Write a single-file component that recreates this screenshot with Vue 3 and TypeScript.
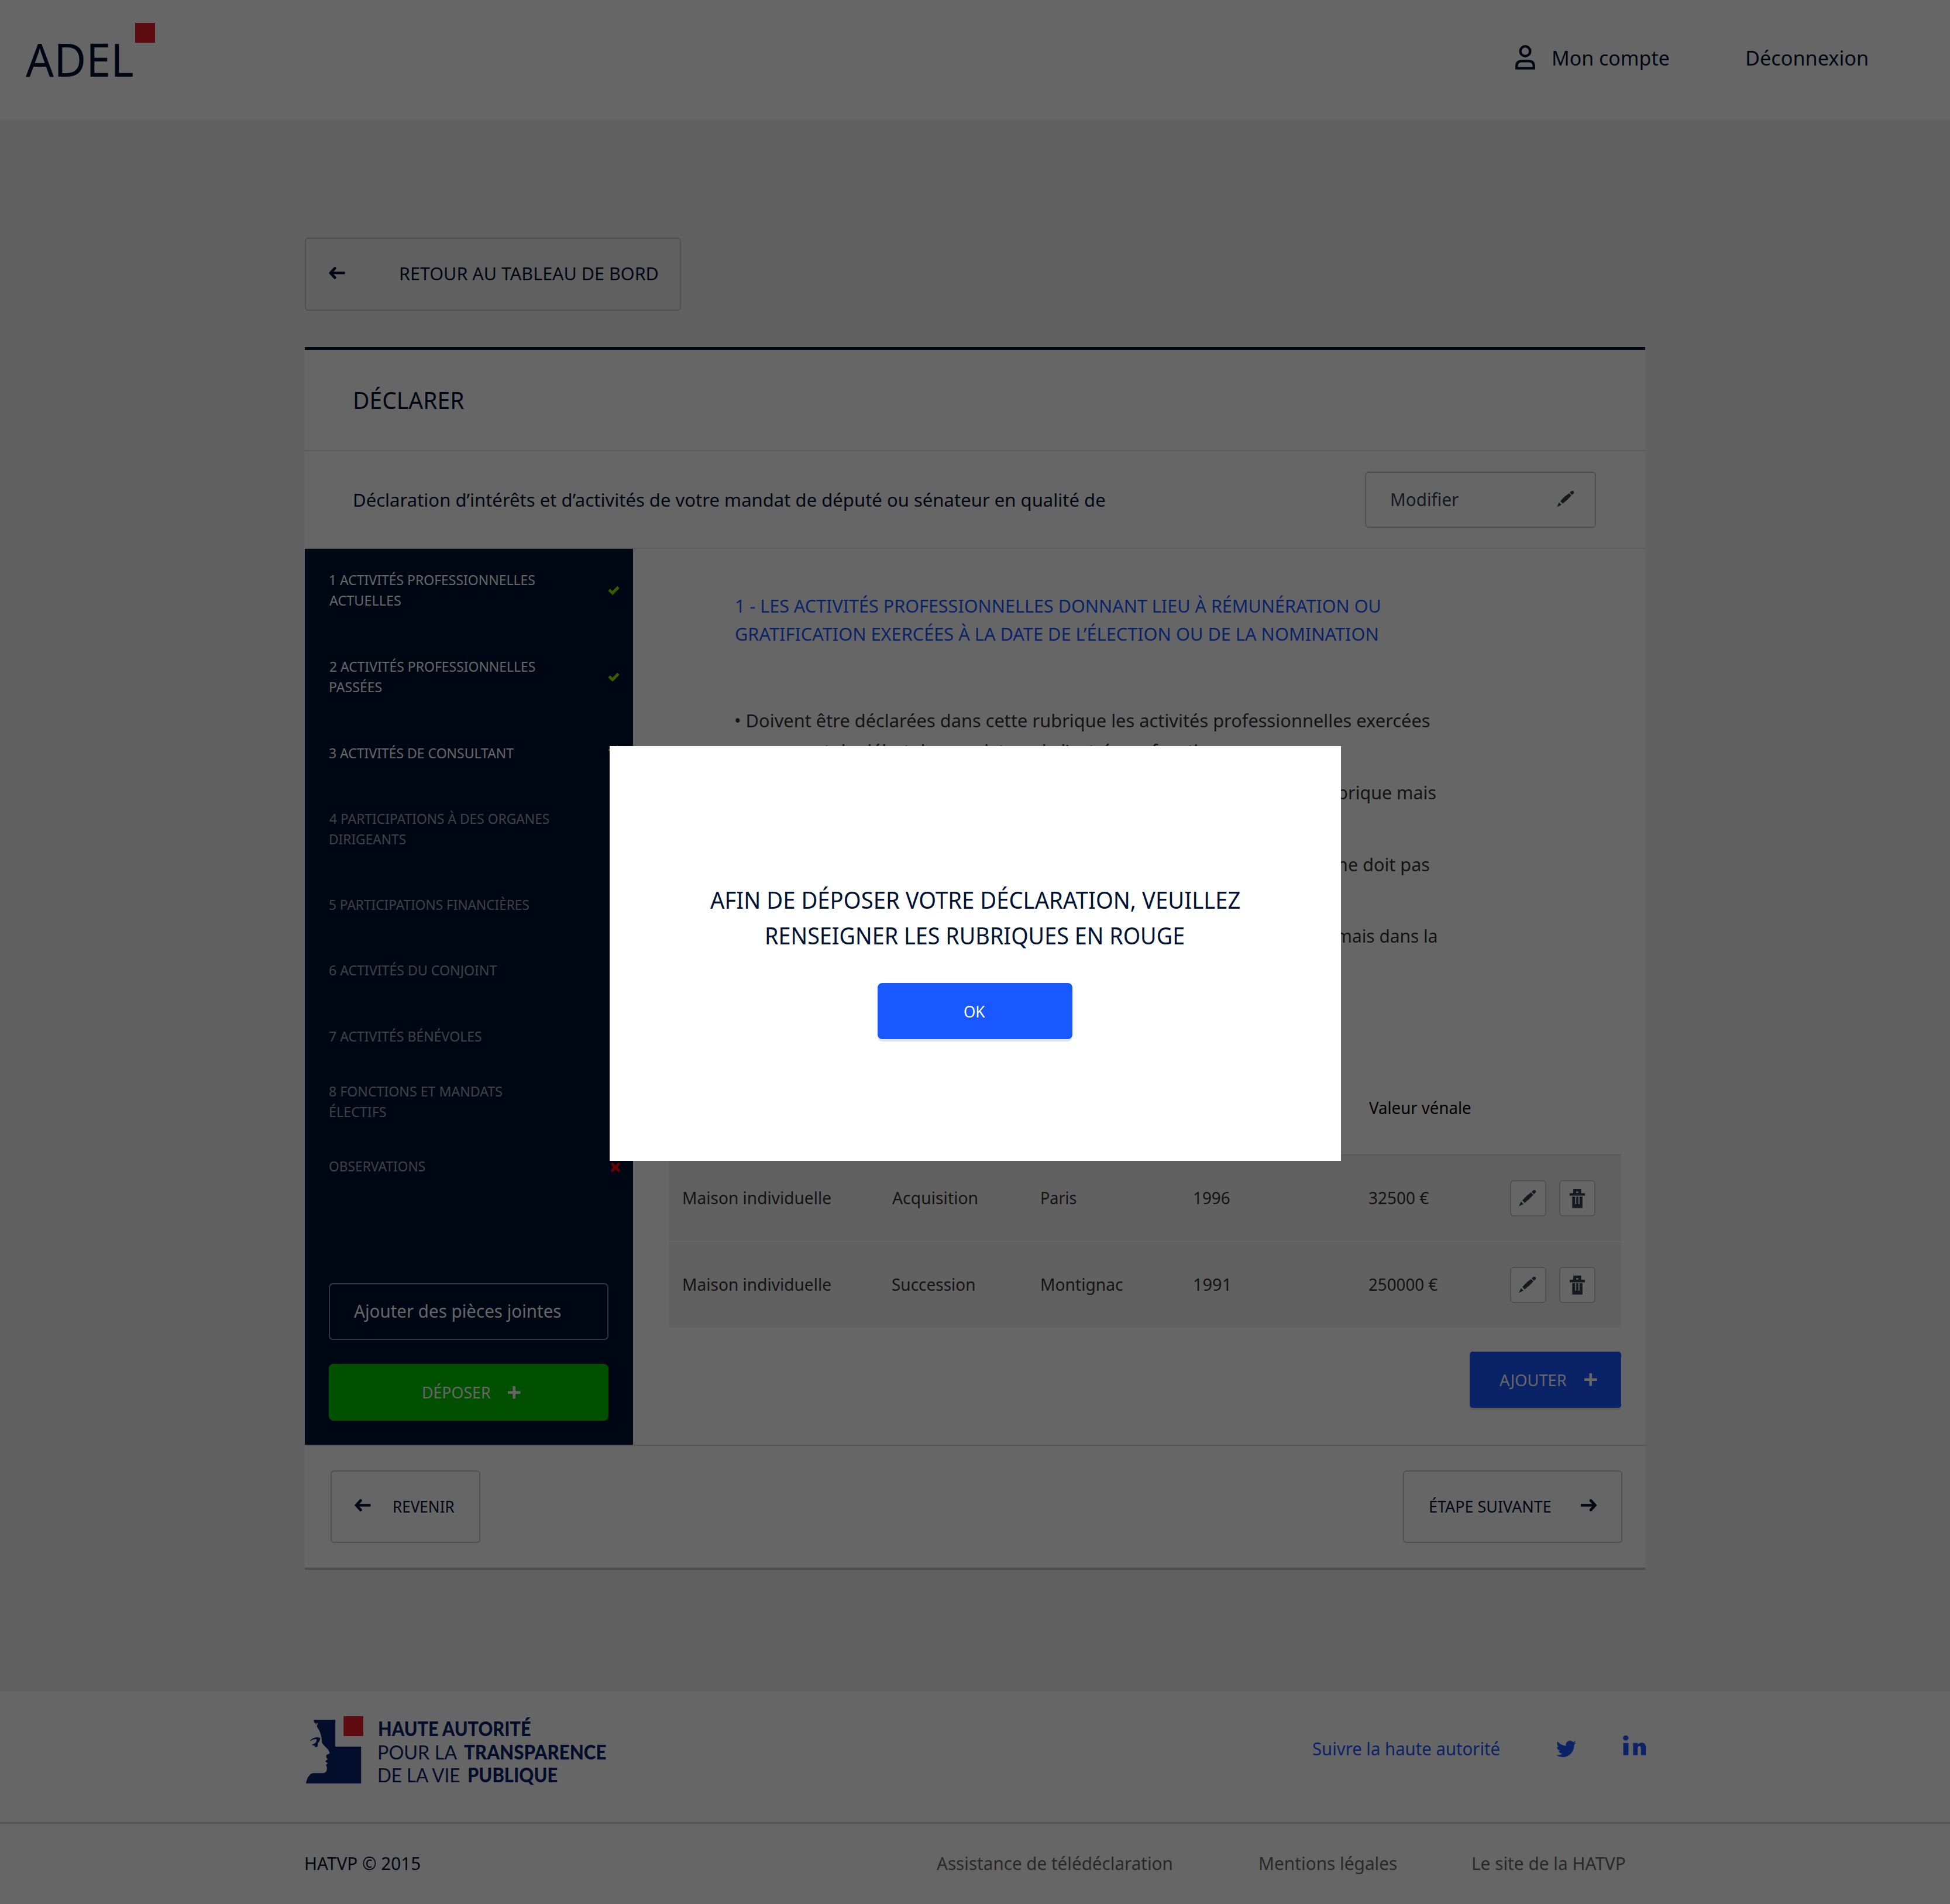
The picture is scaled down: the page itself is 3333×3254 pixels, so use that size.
<script setup lang="ts">
import { h, type Directive, type FunctionalComponent } from 'vue'

interface Line {
  text: string
  dx: number
  w: number
}
interface Rubrique {
  lines: Line[]
  height: number
  state?: 'ok' | 'ko'
  off?: boolean
}
interface Cell {
  text: string
  w: number
}

/* Condenses a line of text so that its ink spans [indent, indent + width]. */
const context = document.createElement('canvas').getContext('2d')!
const vFit: Directive<HTMLElement, number | [number, number]> = {
  mounted(el, { value }) {
    const [x, width] = Array.isArray(value) ? value : [0, value]
    const cs = getComputedStyle(el)
    context.font = `${cs.fontWeight} ${cs.fontSize} ${cs.fontFamily}`
    const m = context.measureText(el.textContent ?? '')
    const left = -m.actualBoundingBoxLeft
    const scale = width / (m.actualBoundingBoxRight - left)
    const natural = el.getBoundingClientRect().width
    el.style.transform = `scaleX(${scale})`
    el.style.marginLeft = `${x - left * scale}px`
    el.style.marginRight = `${width + left * scale - natural}px`
  },
}

const icon = (w: number, hgt: number, children: () => ReturnType<typeof h>[]): FunctionalComponent => () =>
  h('svg', { width: w, height: hgt, viewBox: `0 0 ${w} ${hgt}`, fill: 'currentColor' }, children())
const line = (d: string, sw: number, cap = 'butt') =>
  h('path', { d, fill: 'none', stroke: 'currentColor', 'stroke-width': sw, 'stroke-linecap': cap, 'stroke-linejoin': 'miter' })
const fill = (d: string) => h('path', { d, 'fill-rule': 'evenodd' })

const ArrowLeft = icon(27.5, 21, () => [line('M27.5 10.5H4', 4.4), line('M10.5 2.4 3 10.5l7.5 8.1', 4.6, 'round')])
const ArrowRight = icon(27.5, 21, () => [line('M0 10.5h23.5', 4.4), line('M17 2.4l7.5 8.1-7.5 8.1', 4.6, 'round')])
const Plus = icon(21.5, 21.5, () => [line('M10.75 0v21.5M0 10.75h21.5', 4.6)])
const Check = icon(20, 16, () => [line('M2 7l6 5.6L18 2.4', 5)])
const Cross = icon(16, 16, () => [line('M2.7 2.7l10.6 10.6M13.3 2.7 2.7 13.3', 5, 'round')])
const Pencil = icon(29.5, 27.6, () => [
  fill('M0 27.6 3.9 19.4 7.9 23.8ZM6 17.4Q12 10 20.8 4.1L25 7.8Q18 16 10 21.8ZM22.1 2.9Q24 .2 26 .1Q28 -.2 29 1.2Q30 3 28.4 4.6L25.9 6.8Z'),
])
const Trash = icon(26, 32.5, () => [
  fill('M6 0h13.6v7.3H26v4.2H0V7.3h6ZM11 4.4v2.4h3.8V4.4ZM4.3 13h5v13h1.9V13h3.6v13h1.9V13h5.1v19.5H4.3Z'),
])
const User = icon(34, 42, () => [
  h('ellipse', { cx: 17, cy: 10.6, rx: 8.4, ry: 8.4, fill: 'none', stroke: 'currentColor', 'stroke-width': 4.3 }),
  line('M2.2 39.6V36.5Q2.2 27.3 11 27.3H23Q31.8 27.3 31.8 36.5V39.6Z', 4.3),
])
const LinkedIn = icon(39, 34, () => [
  h('ellipse', { cx: 4.8, cy: 4.3, rx: 4.7, ry: 4.3 }),
  fill('M.6 12.7h8.8v21H.6ZM17.4 12.7h8v2.8c1.5-2 4-3.3 6.8-3.3 5 0 6.8 3.5 6.8 8.5v13h-8.2V22c0-2.5-.8-3.9-2.5-3.9-2 0-3.1 1.4-3.1 3.8v11.8h-7.8Z'),
])

const rubriques: Rubrique[] = [
  { lines: [{ text: '1 ACTIVITÉS PROFESSIONNELLES', dx: 1.5, w: 350 }, { text: 'ACTUELLES', dx: 0.7, w: 122 }], height: 148, state: 'ok' },
  { lines: [{ text: '2 ACTIVITÉS PROFESSIONNELLES', dx: 1, w: 350.5 }, { text: 'PASSÉES', dx: 1.5, w: 88.4 }], height: 148, state: 'ok' },
  { lines: [{ text: '3 ACTIVITÉS DE CONSULTANT', dx: 0.7, w: 315 }], height: 111.9, state: 'ok' },
  { lines: [{ text: '4 PARTICIPATIONS À DES ORGANES', dx: 0.3, w: 375.4 }, { text: 'DIRIGEANTS', dx: 1.5, w: 129.3 }], height: 147.5, off: true },
  { lines: [{ text: '5 PARTICIPATIONS FINANCIÈRES', dx: 0.7, w: 341 }], height: 112, off: true },
  { lines: [{ text: '6 ACTIVITÉS DU CONJOINT', dx: 0.3, w: 286.2 }], height: 112.2, off: true },
  { lines: [{ text: '7 ACTIVITÉS BÉNÉVOLES', dx: 0.7, w: 259.8 }], height: 94.3, off: true },
  { lines: [{ text: '8 FONCTIONS ET MANDATS', dx: 0.3, w: 295 }, { text: 'ÉLECTIFS', dx: 1.5, w: 95.7 }], height: 128.4, off: true },
  { lines: [{ text: 'OBSERVATIONS', dx: 0.7, w: 163.4 }], height: 35.4, state: 'ko', off: true },
]

const regles = [
  { tail: 'rubrique mais', w: 198, end: 1197.5 },
  { tail: 'ne doit pas', w: 156, end: 1186.5 },
  { tail: 'mais dans la', w: 171, end: 1199.5 },
]

const rows: Cell[][] = [
  [{ text: 'Maison individuelle', w: 252.5 }, { text: 'Acquisition', w: 145 }, { text: 'Paris', w: 59.5 }, { text: '1996', w: 61 }, { text: '32500 €', w: 102.3 }],
  [{ text: 'Maison individuelle', w: 252.5 }, { text: 'Succession', w: 140.5 }, { text: 'Montignac', w: 139.5 }, { text: '1991', w: 58.5 }, { text: '250000 €', w: 117.5 }],
]
</script>

<template>
  <div class="page">
    <header class="top">
      <div class="brand">
        <span v-fit="183.5" class="t brand-name">ADEL</span>
        <i class="brand-square"></i>
      </div>
      <nav class="account">
        <div class="profile">
          <User />
          <a v-fit="198" class="t">Mon compte</a>
        </div>
        <a v-fit="205.5" class="t">Déconnexion</a>
      </nav>
    </header>

    <main class="main">
      <button class="btn back">
        <ArrowLeft />
        <span v-fit="[1, 440]" class="t">RETOUR AU TABLEAU DE BORD</span>
      </button>

      <section class="card">
        <h1 class="title"><span v-fit="187" class="t">DÉCLARER</span></h1>
        <div class="subject">
          <span v-fit="1283" class="t">Déclaration d’intérêts et d’activités de votre mandat de député ou sénateur en qualité de</span>
          <button class="btn edit">
            <span v-fit="114.5" class="t">Modifier</span>
            <Pencil class="pencil" />
          </button>
        </div>

        <div class="body">
          <aside class="side">
            <div v-for="(r, i) in rubriques" :key="i" class="rub" :class="{ off: r.off, short: r.lines.length === 1 }" :style="{ height: r.height + 'px' }">
              <div>
                <span v-for="l in r.lines" :key="l.text" v-fit="[l.dx, l.w]" class="t rub-line">{{ l.text }}</span>
              </div>
              <Check v-if="r.state === 'ok'" class="ok" />
              <Cross v-if="r.state === 'ko'" class="ko" />
            </div>
            <div class="side-actions">
              <button class="btn attach"><span v-fit="353.5" class="t">Ajouter des pièces jointes</span></button>
              <button class="btn submit">
                <span v-fit="115.5" class="t">DÉPOSER</span>
                <Plus />
              </button>
            </div>
          </aside>

          <div class="content">
            <h2 class="heading">
              <span v-fit="[1.5, 1101]" class="t">1 - LES ACTIVITÉS PROFESSIONNELLES DONNANT LIEU À RÉMUNÉRATION OU</span>
              <span v-fit="[0.5, 1097]" class="t">GRATIFICATION EXERCÉES À LA DATE DE L’ÉLECTION OU DE LA NOMINATION</span>
            </h2>
            <div class="rules">
              <div class="rule">
                <span v-fit="[1, 1186.5]" class="t">• Doivent être déclarées dans cette rubrique les activités professionnelles exercées</span>
                <span v-fit="850" class="t">au moment du début du mandat ou de l’entrée en fonctions.</span>
              </div>
              <div v-for="r in regles" :key="r.tail" class="rule split" :style="{ width: r.end + 'px' }">
                <span v-fit="r.w" class="t">{{ r.tail }}</span>
              </div>
            </div>

            <div class="table">
              <div class="row head">
                <span v-fit="174" class="t value">Valeur vénale</span>
              </div>
              <div v-for="(row, i) in rows" :key="i" class="row">
                <span v-for="c in row" :key="c.text" v-fit="c.w" class="t cell">{{ c.text }}</span>
                <button class="tool"><Pencil class="small-pencil" /></button>
                <button class="tool"><Trash /></button>
              </div>
            </div>

            <button class="btn add">
              <span v-fit="114.5" class="t">AJOUTER</span>
              <Plus />
            </button>
          </div>
        </div>

        <div class="separator"></div>
        <div class="steps">
          <button class="btn prev">
            <ArrowLeft class="up" />
            <span v-fit="103.7" class="t">REVENIR</span>
          </button>
          <button class="btn next">
            <span v-fit="206.5" class="t">ÉTAPE SUIVANTE</span>
            <ArrowRight class="up" />
          </button>
        </div>
      </section>
    </main>

    <footer class="foot">
      <div class="foot-top">
        <svg class="emblem" viewBox="60 159 256 345" preserveAspectRatio="none">
          <path fill="#e81c23" d="M228 159H316V261H228Z" />
          <path
            fill="#07256e"
            d="M95 178H191V315H306V504H60C64 478 74 455 92 451H137C150 449 156 437 153 420L149 409 157 401 146 389 157 380C150 371 148 366 152 357L165 350C166 340 158 328 150 320C138 305 130 300 131 285C130 262 125 245 117 227C108 212 107 208 112 200Q112 190 107 196L105 204 103 196Q93 192 95 178Z"
          />
          <path fill="#07256e" d="M76 288C84 274 98 267 112 267L124 271C121 285 121 290 114 296L112 316 98 318 101 311 85 307C95 300 103 298 105 290C107 283 109 279 107 277C96 276 86 281 76 288Z" />
        </svg>
        <div class="authority">
          <div class="auth-line"><b v-fit="260.5" class="t">HAUTE AUTORITÉ</b></div>
          <div class="auth-line">
            <span v-fit="133.5" class="t">POUR LA</span>
            <b v-fit="243" class="t">TRANSPARENCE</b>
          </div>
          <div class="auth-line vie">
            <span v-fit="139.3" class="t">DE LA VIE</span>
            <b v-fit="152" class="t">PUBLIQUE</b>
          </div>
        </div>
        <div class="social">
          <span v-fit="319.5" class="t">Suivre la haute autorité</span>
          <svg class="twitter" viewBox="0 2.25 24 19.5" preserveAspectRatio="none" fill="currentColor">
            <path d="M23.953 4.57a10 10 0 01-2.825.775 4.958 4.958 0 002.163-2.723c-.951.555-2.005.959-3.127 1.184a4.92 4.92 0 00-8.384 4.482C7.69 8.095 4.067 6.13 1.64 3.162a4.822 4.822 0 00-.666 2.475c0 1.71.87 3.213 2.188 4.096a4.904 4.904 0 01-2.228-.616v.06a4.923 4.923 0 003.946 4.827 4.996 4.996 0 01-2.212.085 4.936 4.936 0 004.604 3.417 9.867 9.867 0 01-6.102 2.105c-.39 0-.779-.023-1.17-.067a13.995 13.995 0 007.557 2.209c9.053 0 13.998-7.496 13.998-13.985 0-.21 0-.42-.015-.63A9.935 9.935 0 0024 4.59z" />
          </svg>
          <LinkedIn class="linkedin" />
        </div>
      </div>
      <div class="foot-bottom">
        <span v-fit="[1.8, 195.5]" class="t">HATVP © 2015</span>
        <div class="links">
          <a v-fit="401.5" class="t">Assistance de télédéclaration</a>
          <div class="links-end">
            <a v-fit="233.5" class="t">Mentions légales</a>
            <a v-fit="260" class="t">Le site de la HATVP</a>
          </div>
        </div>
      </div>
    </footer>

    <div class="overlay">
      <div class="modal">
        <p class="message">
          <span v-fit="905" class="t">AFIN DE DÉPOSER VOTRE DÉCLARATION, VEUILLEZ</span>
          <span v-fit="713.5" class="t">RENSEIGNER LES RUBRIQUES EN ROUGE</span>
        </p>
        <button class="btn confirm"><span v-fit="36.5" class="t">OK</span></button>
      </div>
    </div>
  </div>
</template>

<style>
body {
  margin: 0;
}
</style>

<style scoped>
.page {
  position: relative;
  width: 3333px;
  height: 3254px;
  overflow: hidden;
  background: #f2f2f2;
  color: #001233;
  font-family: 'Noto Sans', 'Open Sans', sans-serif;
  font-size: 31.5px;
}
.page * {
  box-sizing: border-box;
}
.t {
  display: block;
  width: max-content;
  flex: none;
  white-space: nowrap;
  transform-origin: 0 50%;
}
svg {
  display: block;
  flex: none;
  overflow: visible;
}
h1,
h2,
p {
  margin: 0;
  font-weight: 400;
}
.btn,
.tool {
  display: flex;
  align-items: center;
  padding: 0;
  border: 2px solid #c8c8c8;
  border-radius: 6px;
  background: none;
  color: inherit;
  font: inherit;
}

.top {
  display: flex;
  justify-content: space-between;
  height: 204px;
  background: #fff;
}
.brand {
  display: flex;
  padding-left: 43.6px;
}
.brand-name {
  font-size: 78.6px;
  line-height: 201px;
}
.brand-square {
  width: 33.6px;
  height: 33.6px;
  margin: 39.3px 0 0 4px;
  background: #e81c23;
}
.account {
  display: flex;
  align-items: center;
  gap: 133px;
  height: 196px;
  padding-right: 141.5px;
  font-size: 35.4px;
}
.profile {
  display: flex;
  align-items: center;
  gap: 31px;
}

.main {
  height: 2686px;
  padding: 202px 520.8px 0;
}
.back {
  width: 643px;
  height: 125px;
  padding: 0 0 4px 39.7px;
  gap: 94px;
}
.card {
  margin-top: 62px;
  width: 2291.7px;
  border-top: 5px solid #001233;
  border-bottom: 4px solid #c4c4c4;
  background: #fff;
}
.title {
  display: flex;
  align-items: center;
  height: 173px;
  padding-left: 85.5px;
  border-bottom: 2px solid #dedede;
  font-size: 39.3px;
}
.subject {
  display: flex;
  align-items: center;
  justify-content: space-between;
  height: 167px;
  padding: 0 84px 0 85px;
  border-bottom: 2px solid #e0e0e0;
}
.edit {
  width: 395px;
  height: 96px;
  padding: 0 36px 2px 43px;
  justify-content: space-between;
  color: #354052;
}
.pencil {
  margin-top: 1px;
}
.body {
  display: flex;
  height: 1531px;
}
.side {
  display: flex;
  flex-direction: column;
  width: 561px;
  flex: none;
  padding: 36px 41.7px 41.5px;
  background: #001233;
  color: #fff;
}
.rub {
  display: flex;
  justify-content: space-between;
  width: 496.2px;
  flex: none;
  font-size: 23.6px;
  line-height: 35.4px;
}
.rub.off .rub-line {
  opacity: 0.6;
}
.ok {
  margin-top: 27px;
  color: #8ce600;
}
.short .ok {
  margin-top: 3px;
}
.ko {
  margin: 11px -1.6px 0 0;
  color: #f00;
}
.side-actions {
  display: flex;
  flex-direction: column;
  gap: 41.5px;
  margin-top: auto;
}
.attach {
  height: 96.4px;
  padding: 0 0 3px 40.5px;
  border-color: rgba(255, 255, 255, 0.5);
  border-radius: 7px;
}
.submit {
  height: 96.4px;
  padding-left: 160.3px;
  gap: 30px;
  border: 0;
  border-radius: 8px;
  background: #00c800;
  font-size: 27.5px;
}
.content {
  display: flex;
  flex-direction: column;
  flex: 1;
  padding-top: 73px;
}
.heading {
  padding-left: 174.5px;
  color: #1957ff;
  font-size: 31.5px;
  line-height: 47.9px;
}
.rules {
  display: flex;
  flex-direction: column;
  gap: 18.9px;
  margin-top: 98px;
  padding-left: 174.5px;
  color: #333;
  line-height: 52px;
}
.rule {
  height: 104px;
}
.split {
  display: flex;
  justify-content: flex-end;
}
.table {
  width: 1628.4px;
  margin: 134.5px 0 0 60.8px;
}
.row {
  display: grid;
  grid-template-columns: 357.5px 254.7px 260.8px 299.5px 240.8px 83.9px 62.5px;
  align-items: center;
  height: 148px;
  padding-left: 25px;
  border-bottom: 2px solid #fff;
  background: #f2f2f2;
  color: #333;
  font-size: 29.5px;
}
.row.head {
  height: 163px;
  border-bottom: 2px solid #dcdcdc;
  background: none;
  color: #000;
}
.value {
  grid-column: 5;
}
.cell {
  padding-bottom: 3px;
}
.tool {
  width: 62.5px;
  height: 62.5px;
  justify-content: center;
  background: #fff;
  color: #354052;
}
.small-pencil {
  margin-right: 2px;
}
.add {
  width: 258.5px;
  height: 96.4px;
  margin: 39px 41.5px 0 auto;
  padding-left: 50.7px;
  gap: 30px;
  border: 0;
  border-radius: 5px;
  background: #1957ff;
  box-shadow: 0 4px 0 rgba(0, 0, 0, 0.1);
  color: #fff;
  font-size: 27.5px;
}
.separator {
  height: 2px;
  margin: 0 -2.5px 0 2.5px;
  background: #dadada;
}
.steps {
  display: flex;
  justify-content: space-between;
  height: 208px;
  padding: 41.5px 39.6px 0 43.9px;
  font-size: 27.5px;
}
.up {
  margin-bottom: 4px;
}
.prev {
  width: 256.3px;
  height: 124.5px;
  padding-left: 39.3px;
  gap: 39.5px;
}
.next {
  width: 375.4px;
  height: 124.5px;
  padding: 0 41.5px 0 44.4px;
  justify-content: space-between;
}

.foot {
  height: 364px;
  background: #fff;
}
.foot-top {
  display: flex;
  height: 227px;
  padding: 43px 520.3px 0 523px;
  border-bottom: 3px solid #cfcfcf;
}
.emblem {
  width: 98px;
  height: 115px;
}
.authority {
  margin: 2px 0 0 26.7px;
  color: #07256e;
  font: 33.7px/39.7px Lato, sans-serif;
}
.auth-line {
  display: flex;
  gap: 11.5px;
}
.auth-line b {
  font-weight: 900;
}
.auth-line.vie {
  gap: 13.8px;
}
.social {
  display: flex;
  margin-left: auto;
  padding-top: 33px;
  color: #1957ff;
  line-height: 40px;
}
.social .t {
  margin-top: 2px;
}
.twitter {
  width: 34px;
  height: 28px;
  margin: 9px 80px 0 96px;
}
.foot-bottom {
  display: flex;
  align-items: center;
  justify-content: space-between;
  height: 137px;
  padding: 0 555px 4px 521.5px;
}
.links {
  display: flex;
  gap: 151.5px;
  color: #666;
}
.links-end {
  display: flex;
  gap: 130.5px;
}

.overlay {
  position: absolute;
  inset: 0;
  display: flex;
  justify-content: center;
  align-items: flex-start;
  padding-top: 1275.3px;
  background: rgba(0, 0, 0, 0.6);
}
.modal {
  display: flex;
  flex-direction: column;
  align-items: center;
  width: 1250px;
  height: 708.3px;
  padding-top: 233px;
  background: #fff;
}
.message {
  display: flex;
  flex-direction: column;
  align-items: center;
  font-size: 39.3px;
  line-height: 60.4px;
}
.confirm {
  width: 333.3px;
  height: 95.8px;
  margin-top: 51px;
  justify-content: center;
  border: 0;
  border-radius: 8px;
  background: #1957ff;
  box-shadow: 0 4px 0 rgba(0, 0, 0, 0.1);
  color: #fff;
  font-size: 27.5px;
}
</style>
